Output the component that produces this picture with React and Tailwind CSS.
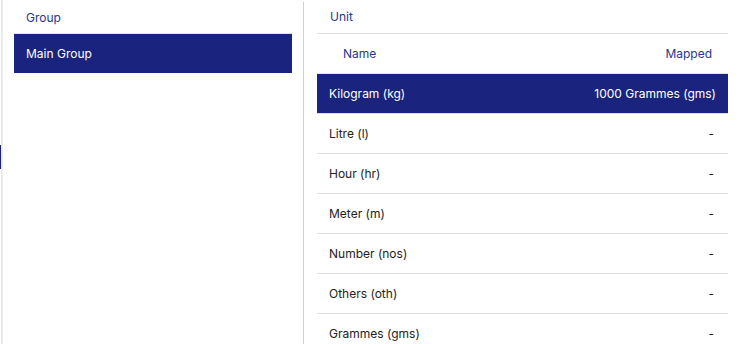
export default function App() {
  const rows = [
    ["Litre (l)", "-"],
    ["Hour (hr)", "-"],
    ["Meter (m)", "-"],
    ["Number (nos)", "-"],
    ["Others (oth)", "-"],
    ["Grammes (gms)", "-"],
  ];
  return (
    <div
      className="w-[740px] h-[344px] overflow-hidden bg-white flex text-[12px]"
      style={{ fontFamily: "Inter, 'Noto Sans', sans-serif" }}
    >
      <div className="w-[1px] shrink-0 flex flex-col">
        <div className="h-[145px] shrink-0" />
        <div className="h-[24px] shrink-0 bg-[#1a237e]" />
      </div>
      <div className="w-[2px] shrink-0 bg-gradient-to-r from-[#e4e4e4] to-[#f2f2f2]" />
      <div className="w-[301px] shrink-0 border-r border-[#d0d0d0] px-[11px] flex flex-col mt-[2px]">
        <div className="h-[32px] shrink-0 border-b border-[#e0e0e0] flex items-center pl-[12px] text-[#283593]">
          Group
        </div>
        <div className="h-[39px] shrink-0 bg-[#1a237e] text-white flex items-center pl-[12px]">
          Main Group
        </div>
      </div>
      <div className="flex-1 pl-[13px] pr-[12px] flex flex-col">
        <div className="h-[34px] shrink-0 border-b border-[#e0e0e0] flex items-center pl-[13px] text-[#283593]">
          Unit
        </div>
        <div className="h-[40px] shrink-0 border-b border-[#e0e0e0] flex items-center justify-between pl-[26px] pr-[16px] text-[#283593]">
          <span>Name</span>
          <span>Mapped</span>
        </div>
        <div className="h-[39px] shrink-0 bg-[#1a237e] text-white flex items-center justify-between px-[12px]">
          <span>Kilogram (kg)</span>
          <span>1000 Grammes (gms)</span>
        </div>
        {rows.map(([n, m]) => (
          <div
            key={n}
            className="h-[40px] shrink-0 border-t border-[#e0e0e0] flex items-center justify-between px-[12px] text-[#222222]"
          >
            <span>{n}</span>
            <span className="pr-[2px]">{m}</span>
          </div>
        ))}
      </div>
    </div>
  );
}
